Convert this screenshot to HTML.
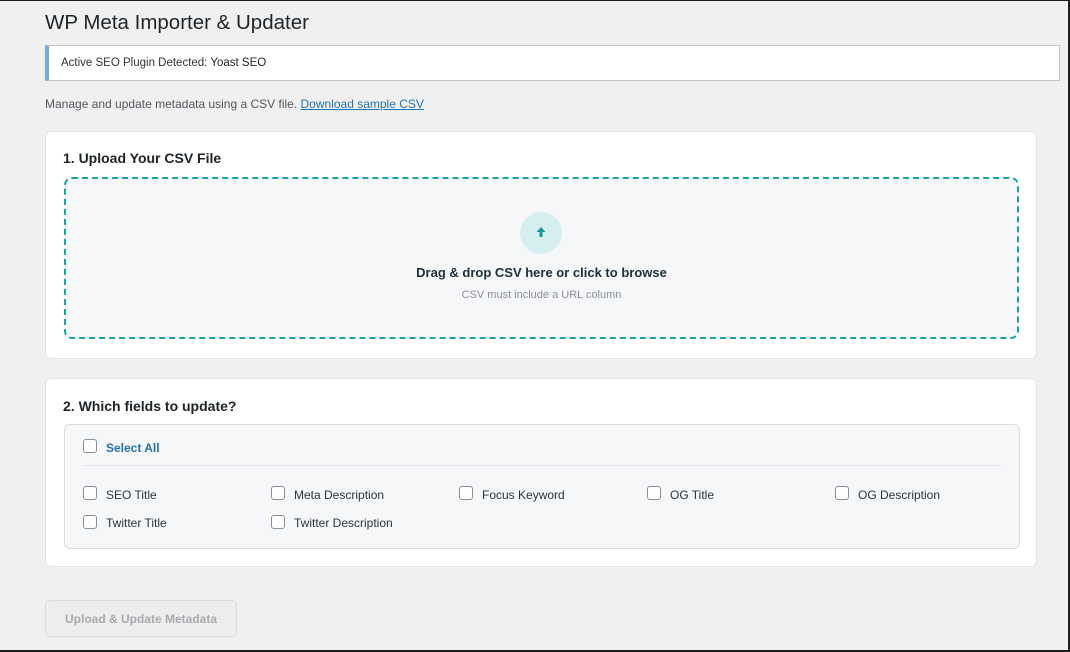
<!DOCTYPE html>
<html><head><meta charset="utf-8"><style>
*{box-sizing:border-box;margin:0;padding:0}
html,body{width:1070px;height:652px;overflow:hidden}
body{background:#f0f0f1;font-family:"Liberation Sans",sans-serif;color:#1d2327;position:relative;border-top:1px solid #1e1e1e;border-right:2px solid #1e1e1e;border-bottom:2px solid #1e1e1e}
.abs{position:absolute}
h1{position:absolute;left:45px;top:10px;font-size:20.5px;font-weight:400;color:#1d2327}
.notice{left:45px;top:44px;width:1015px;height:36px;background:#fff;border:1px solid #c3c4c7;border-left:4px solid #72aee6;font-size:11.5px;padding:11px 0 0 12px;color:#333}
.desc{left:45px;top:96px;font-size:12px;color:#50575e}
.desc a{color:#2271b1;text-decoration:underline}
.card{left:45px;width:992px;background:#fff;border:1px solid #e2e4e7;border-radius:6px}
.card h2{position:absolute;left:17px;font-size:14px;font-weight:700;color:#1d2327}
.drop{position:absolute;left:18px;top:45px;width:955px;height:162px;border:2px dashed #1aa3a3;border-radius:8px;background:#f6f7f8}
.circle{position:absolute;left:454px;top:33px;width:42px;height:42px;border-radius:50%;background:#d7eef0}
.fields{position:absolute;left:18px;top:45px;width:956px;height:125px;border:1px solid #dcdcde;border-radius:6px;background:#f6f7f8}
.cb{position:absolute;width:14px;height:14px;border:1.5px solid #8c8f94;border-radius:3px;background:#fff}
.lbl{position:absolute;font-size:12px;color:#2c3338}
.btn{left:45px;top:599px;width:192px;height:37px;border:1px solid #dcdcde;border-radius:5px;background:#ededee;color:#a7aaad;font-size:12px;font-weight:700;text-align:center;line-height:36px}
</style></head><body>
<h1>WP Meta Importer &amp; Updater</h1>
<div class="abs notice">Active SEO Plugin Detected: <span style="color:#1d2327">Yoast SEO</span></div>
<div class="abs desc">Manage and update metadata using a CSV file. <a>Download sample CSV</a></div>
<div class="abs card" style="top:130px;height:228px">
<h2 style="top:18px">1. Upload Your CSV File</h2>
<div class="drop">
<div class="circle"><svg width="42" height="42" viewBox="0 0 42 42"><path d="M21 15l-4.5 5h3v5h3v-5h3z" fill="#149b9b"/></svg></div>
<div class="abs" style="left:0;width:951px;top:86px;text-align:center;font-size:13px;font-weight:700;color:#1d2f3a">Drag &amp; drop CSV here or click to browse</div>
<div class="abs" style="left:0;width:951px;top:110px;text-align:center;font-size:11px;color:#8c8f94">CSV must include a URL column</div>
</div>
</div>
<div class="abs card" style="top:377px;height:189px">
<h2 style="top:19px">2. Which fields to update?</h2>
<div class="fields">
<div class="cb" style="left:18px;top:14px"></div><div class="lbl" style="left:41px;top:16px;color:#2271b1;font-weight:700">Select All</div>
<div class="abs" style="left:18px;top:40px;width:918px;border-top:1px solid #e2e4e7"></div>
<div class="cb" style="left:18px;top:61px"></div><div class="lbl" style="left:41px;top:63px">SEO Title</div>
<div class="cb" style="left:206px;top:61px"></div><div class="lbl" style="left:229px;top:63px">Meta Description</div>
<div class="cb" style="left:394px;top:61px"></div><div class="lbl" style="left:417px;top:63px">Focus Keyword</div>
<div class="cb" style="left:582px;top:61px"></div><div class="lbl" style="left:605px;top:63px">OG Title</div>
<div class="cb" style="left:770px;top:61px"></div><div class="lbl" style="left:793px;top:63px">OG Description</div>
<div class="cb" style="left:18px;top:90px"></div><div class="lbl" style="left:41px;top:91px">Twitter Title</div>
<div class="cb" style="left:206px;top:90px"></div><div class="lbl" style="left:229px;top:91px">Twitter Description</div>
</div>
</div>
<div class="abs btn">Upload &amp; Update Metadata</div>
</body></html>
